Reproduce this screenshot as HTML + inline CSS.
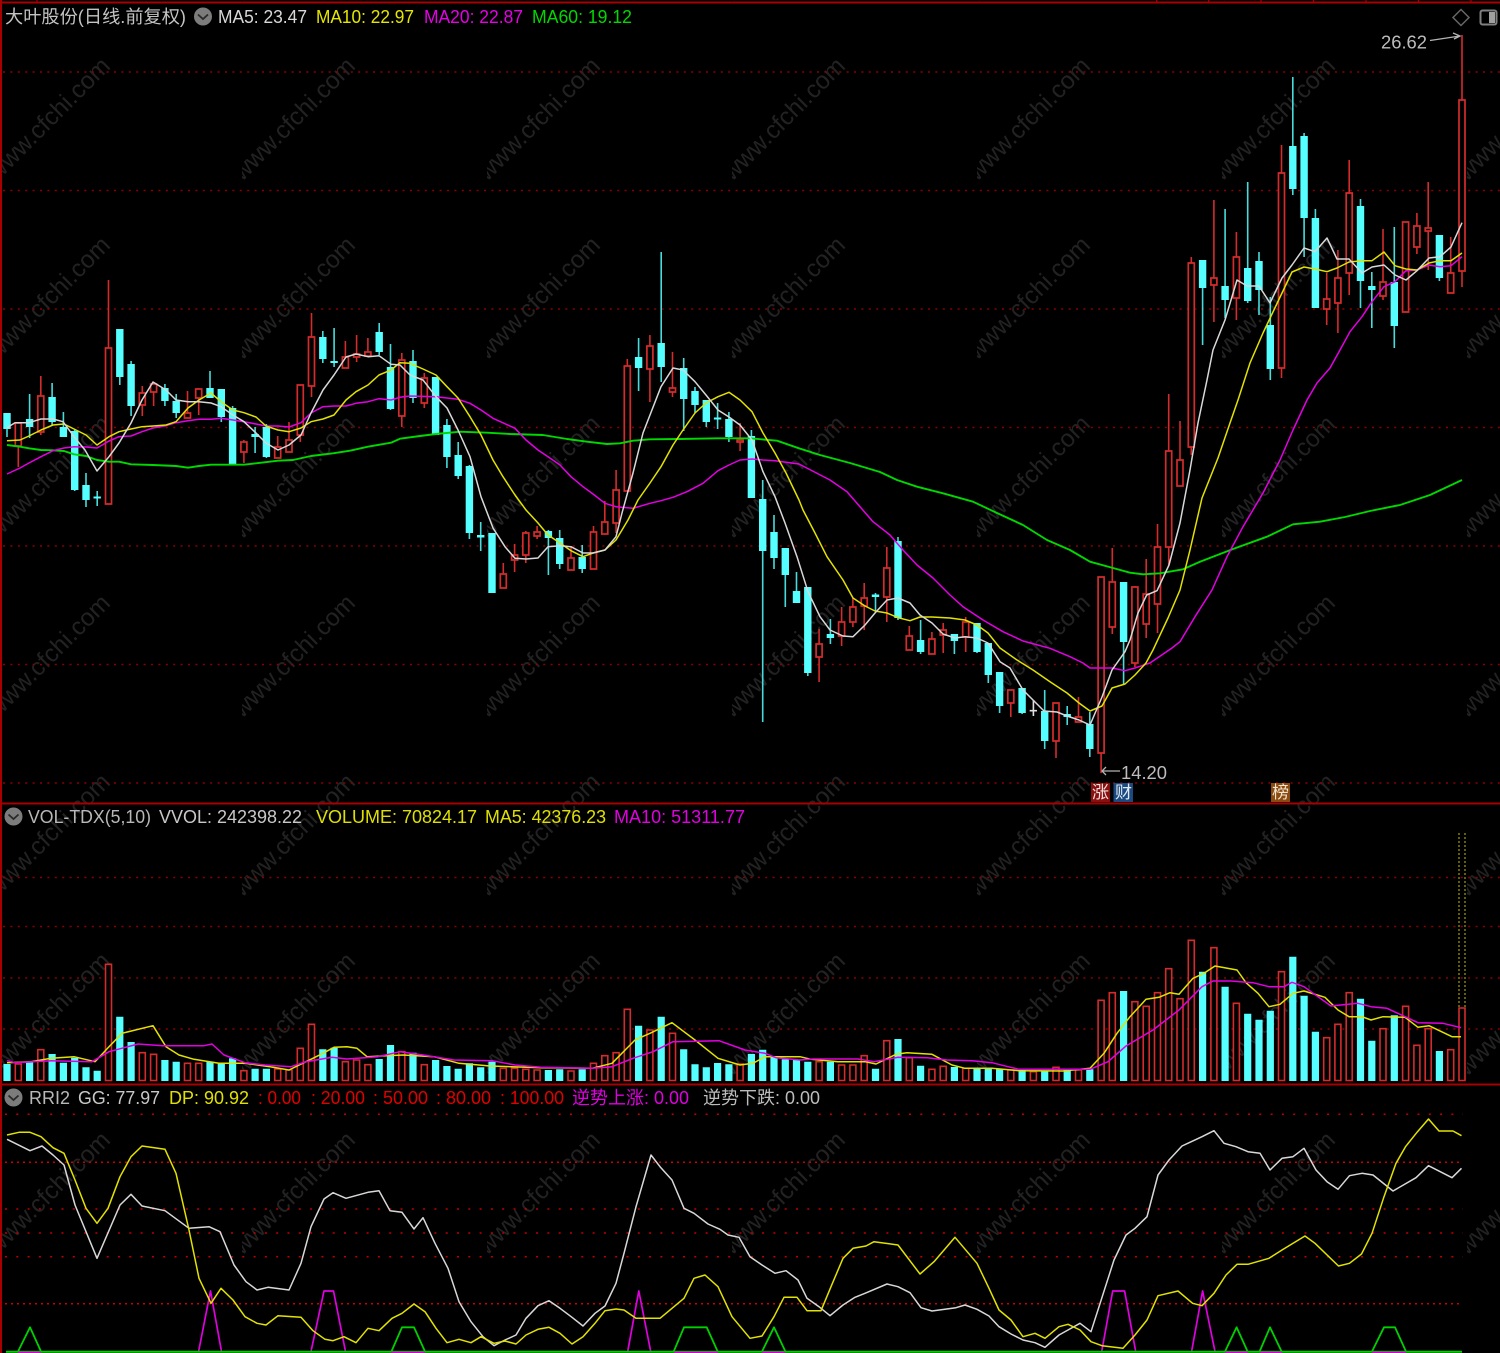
<!DOCTYPE html>
<html lang="zh"><head><meta charset="utf-8"><title>大叶股份</title>
<style>
html,body{margin:0;padding:0;background:#000;width:1500px;height:1353px;overflow:hidden}
svg{display:block}
text{font-family:"Liberation Sans","Noto Sans CJK SC",sans-serif;font-size:18px}
.l{fill:none;stroke-width:1.5;stroke-linejoin:round}
.w{stroke:#d8d8d8}.y{stroke:#e2e200}.m{stroke:#e400e4}.g{stroke:#00d800;stroke-width:1.9}
</style></head><body>
<svg xmlns="http://www.w3.org/2000/svg" width="1500" height="1353" viewBox="0 0 1500 1353">
<defs><pattern id="wm" x="-3" y="3" width="245" height="179" patternUnits="userSpaceOnUse"><text transform="translate(0,179) rotate(-45)" style="font-size:24.5px" fill="#222">www.cfchi.com</text></pattern></defs>
<rect width="1500" height="1353" fill="#000"/>
<rect width="1500" height="1290" fill="url(#wm)"/>

<!-- grid -->
<g fill="none" stroke="#8c0000" stroke-width="1.5" stroke-dasharray="2 5.4">
<path d="M3 72H1500M3 190.5H1500M3 309H1500M3 427.5H1500M3 546H1500M3 664.5H1500M3 783H1500"/>
<path d="M3 877.5H1500M3 926.5H1500M3 978H1500M3 1029H1500"/>
</g>
<g fill="none" stroke="#c00000" stroke-width="1.5" stroke-dasharray="2 9.3"><path d="M5 1114.3H1463M5 1209H1463M5 1233H1463M5 1256.7H1463"/></g>
<g fill="none" stroke="#cc0000" stroke-width="1.5" stroke-dasharray="2 4"><path d="M5 1162.3H1463M5 1303.7H1463"/></g>

<!-- frame -->
<g fill="none" stroke="#a80000">
<path d="M1 0V1353" stroke-width="2"/>
<path d="M0 2.5H1500" stroke-width="2"/>
<path d="M0 803.5H1500M0 1084.5H1500" stroke-width="2"/>
<path stroke-width="1.2" d="M37 0V2M1156.7 0V2M1208.7 0V2M1261 0V2M1313.5 0V2M1366 0V2M1418.5 0V2M1471 0V2"/>
</g>

<!-- red wicks -->
<path fill="none" stroke="#d42c2c" stroke-width="1.6" d="M18.3 423V467M40.8 376V435M108.5 280V504M142.3 386V416M153.6 382V406M187.5 391V418M198.7 388V415M243.9 440V463M277.7 436V458M289 422V452M300.3 385V442M311.5 313V397M345.4 341V368M356.6 335V362M367.9 338V356M401.8 353V427M424.3 373V408M503.3 563V588M514.6 544V572M525.8 531V563M537.1 526V539M571 547V570M593.5 526V569M604.8 501V534M616.1 470V533M627.3 359V491M649.9 335V402M672.5 352V397M740.1 423V451M819.1 629V682M841.6 607V646M852.9 598V627M864.2 583V630M886.8 547V622M909.3 626V650M931.9 632V654M943.2 623V653M965.7 617V652M1010.8 690V717M1056 703V758M1078.5 697V722M1101.1 577V773M1112.3 548V634M1134.9 586V667M1146.2 559V638M1157.5 524V633M1168.7 394V565M1180 421V486M1191.3 257V455M1213.9 200V322M1236.4 232V320M1281.5 145V378M1326.7 273V325M1337.9 250V333M1349.2 160V295M1383 229V300M1405.6 222V312M1416.9 213V254M1428.2 182V270M1450.7 237V293M1462 35V287"/>
<!-- cyan wicks -->
<path fill="none" stroke="#46dcdc" stroke-width="1.6" d="M7 413V437M29.6 394V438M52.1 383V425M63.4 412V437M74.7 430V491M86 473V507M97.2 491V506M119.8 329V385M131.1 361V416M164.9 384V406M176.2 394V418M210 371V398M221.3 389V422M232.6 406V464M255.1 427V453M266.4 424V458M322.8 331V363M334.1 328V367M379.2 323V355M390.5 344V410M413 350V403M435.6 377V435M446.9 419V468M458.2 442V479M469.4 465V539M480.7 522V551M492 533V593M548.4 530V575M559.7 530V569M582.2 545V573M638.6 338V391M661.2 252V382M683.7 358V431M695 387V413M706.3 400V427M717.6 403V429M728.9 412V442M751.4 430V498M762.7 480V722M774 515V569M785.3 548V607M796.5 572V603M807.8 587V676M830.4 619V644M875.5 593V611M898 537V620M920.6 620V654M954.4 634V654M977 623V653M988.3 643V683M999.6 672V713M1022.1 688V714M1044.7 690V749M1067.2 706V725M1089.8 712V757M1123.6 582V685M1202.6 260V345M1225.1 209V318M1247.7 182V303M1259 252V315M1270.3 297V380M1292.8 77V195M1304.1 133V257M1315.4 209V308M1360.5 199V308M1371.8 272V328M1394.3 227V348M1439.4 235V281"/>
<!-- cyan bodies -->
<path fill="none" stroke="#55ffff" stroke-width="7.4" d="M7 413V429M29.6 419V427M52.1 397V422M63.4 427V437M74.7 431V490M86 485V500M97.2 496.5V498.5M119.8 329V377M131.1 364V406M164.9 388V401M176.2 401V413M210 388V398M221.3 389V417M232.6 408V464M255.1 434V437M266.4 427V457M322.8 337V359M334.1 361V363M379.2 332V352M390.5 367V409M413 361V398M435.6 377V435M446.9 425V457M458.2 455V476M469.4 466V533M480.7 535V537.5M492 533V593M548.4 531V538M559.7 538V564M582.2 557V569M638.6 357V368M661.2 343V367M683.7 368V399M695 391V405M706.3 400V422M717.6 417.5V419.5M728.9 419V437M751.4 436V498M762.7 499V551M774 532V558M785.3 548V575M796.5 591V603M807.8 587V673M830.4 634V638M875.5 594.5V597M898 541V618M920.6 640V652M954.4 634V641M977 623V652M988.3 643V675M999.6 672V706M1022.1 688V713M1044.7 711V741M1067.2 714V717M1089.8 724V749M1123.6 582V642M1202.6 260V288M1225.1 286V300M1247.7 268V301M1259 261V290M1270.3 325V369M1292.8 146V189M1304.1 136V218M1315.4 218V308M1360.5 206V281M1371.8 286V290M1394.3 282V326M1439.4 235V278"/>
<path fill="none" stroke="#e0e0e0" stroke-width="1.6" d="M1033.4 700V716M1029.7 710.7H1037"/>
<!-- red bodies -->
<path fill="#000" stroke="#d42c2c" stroke-width="1.7" d="M15.3 423h6V446h-6zM37.8 396h6V432h-6zM105.5 348h6V504h-6zM139.3 393h6V405h-6zM150.6 384h6V392h-6zM184.5 413h6V418h-6zM195.7 389h6V398h-6zM240.9 442h6V452h-6zM274.7 447h6V458h-6zM286 440h6V452h-6zM297.3 385h6V435h-6zM308.5 337h6V386h-6zM342.4 357h6V368h-6zM353.6 354h6V357h-6zM364.9 352h6V356h-6zM398.8 360h6V416h-6zM421.3 378h6V403h-6zM500.3 574h6V588h-6zM511.6 555h6V560h-6zM522.8 533h6V555h-6zM534.1 532h6V536h-6zM568 558h6V570h-6zM590.5 532h6V569h-6zM601.8 522h6V534h-6zM613.1 490h6V523h-6zM624.3 366h6V491h-6zM646.9 346h6V369h-6zM669.5 388h6V392h-6zM737.1 440h6V442h-6zM816.1 644h6V657h-6zM838.6 622h6V636h-6zM849.9 607h6V622h-6zM861.2 598h6V606h-6zM883.8 568h6V597h-6zM906.3 636h6V650h-6zM928.9 639h6V654h-6zM940.2 630h6V635h-6zM962.7 622h6V637h-6zM1007.8 690h6V703h-6zM1053 703h6V741h-6zM1075.5 717h6V722h-6zM1098.1 577h6V753h-6zM1109.3 582h6V627h-6zM1131.9 587h6V663h-6zM1143.2 594h6V624h-6zM1154.5 547h6V604h-6zM1165.7 451h6V547h-6zM1177 460h6V486h-6zM1188.3 263h6V447h-6zM1210.9 278h6V285h-6zM1233.4 257h6V298h-6zM1278.5 173h6V368h-6zM1323.7 299h6V309h-6zM1334.9 278h6V303h-6zM1346.2 193h6V273h-6zM1380 282h6V296h-6zM1402.6 222h6V312h-6zM1413.9 226h6V247h-6zM1425.2 228h6V231h-6zM1447.7 273h6V293h-6zM1459 100h6V271h-6z"/>

<!-- MA lines main -->
<polyline class="l g" points="7,445 20,446.7 29,448.3 41,450 53,450.3 64,451 74,454.3 86,456 97,460 109,461.7 119,461.7 131,464.3 153,465 176,466 188,467.7 199,466 211,464.7 244,464.7 256,463.3 278,460.7 293,460 311,456 333,453.3 350,450.7 368,446.7 391,442.7 400,438.7 420,436 436,434 460,431.7 487,432.7 510,434 543,435 567,439 587,441.7 607,444 620,443.3 633,440.7 650,439.3 680,439 717,438.3 750,438.3 777,440.7 799,448.3 820,455 850,463 880,472 897,480 917,486.7 943,493.3 973,501.7 997,513 1023,525 1047,540 1070,550 1090,561.7 1113,568 1130,572.7 1143,574.3 1160,573.3 1183,569.3 1200,561.7 1233,549 1267,536.7 1293,524.3 1320,521.7 1345,517 1370,511 1400,505 1430,495 1462,480"/>
<polyline class="l m" points="7,474 20,468 29,463 41,456.7 53,450.7 64,448 74,446.7 86,447 97,448 109,441 119,436.7 131,436 142,431.7 153,428 166,425.7 176,422.7 188,420.7 199,419.3 211,419.3 221,418.3 233,420 244,421.7 256,424 266,426 278,426 289,427 301,422.7 311,413 323,406.7 334,406 346,406 356,403.3 368,401.7 379,398.7 391,400 400,397.3 410,396 436,396.7 458,399.3 470,403.3 481,410 493,418.3 515,428.3 526,440 538,450 548,456.7 560,465 571,476.7 583,486.7 593,494 605,503.3 616,506.7 633,508.3 650,503.3 661,500.7 673,497.3 687,491.7 703,483.3 718,470.7 729,465 740,460 752,459 763,460 775,460.7 799,464 830,480 847,491.7 860,506.7 873,521.7 890,535 903,550 917,565 933,578 950,595 963,606.7 983,620 1003,631.7 1023,641 1050,648.3 1070,656.7 1083,663 1090,668 1112,668 1125,670.7 1135,668 1150,663 1172,648 1180,641.7 1195,616.7 1212,590 1227,556.7 1243,526.7 1263,493 1280,460 1293,430 1307,400 1317,383 1330,368 1340,350 1350,331.7 1362,316.7 1372,301.7 1384,286.7 1395,281.7 1406,270.7 1417,270 1429,265 1440,266.7 1451,265.7 1462,256.7"/>
<polyline class="l y" points="7,440.7 20,440 29,436 41,430 53,425 64,424 74,429 86,435 97,445 109,436.7 119,431.7 131,429 142,426.7 153,426 166,425 176,421.7 188,408 199,400 211,393 221,401.7 233,410 244,412.7 256,417 266,426 278,430 289,431.7 301,428 311,421.7 323,419 334,415 346,400 356,391.7 368,385 379,375 391,370 400,362.7 410,363.3 423,369 436,375 447,386.7 458,398 470,416.7 481,435 493,460 503,476.7 515,495 526,510 538,523 548,535 560,543 571,550.7 583,556.7 593,553 605,550 616,540 628,520 638,500 650,483 661,466.7 673,445 683,430 695,413 706,403 718,396.7 729,392.3 740,400 752,411.7 763,433 775,453 786,473 799,500 803,510 815,533 827,556.7 843,580 853,598 865,606 875,611 887,613 898,617.7 910,620.7 920,617 932,617 950,618 965,620 977,625 988,633 1000,648 1017,660 1033,670 1050,681.7 1067,693 1079,703 1090,711 1102,706 1112,688 1125,684 1135,675 1146,663 1153,650 1168,618 1180,590 1190,550 1202,498 1218,458 1230,423 1238,400 1250,363 1263,333 1282,293 1292,272 1304,267 1315,269 1327,271.7 1337,268 1349,262 1362,260.7 1372,260.7 1384,252 1395,265.7 1406,269 1417,270 1429,263 1440,260.7 1451,260.7 1462,253"/>
<polyline class="l w" points="7,427.7 15,422.7 29,422.7 41,419 53,419 63,421.7 74,436.7 85,450 97,471 109,456.7 119,443 131,423 142,400 153,382 166,390 176,400 188,401.7 199,401.7 211,403 221,406.7 233,415 244,421.7 256,433 266,443 278,450 289,445 301,435 311,413 323,390 334,375 346,357 356,354 368,356.7 379,355.7 391,364.3 400,365 410,375 423,380 436,396.7 447,408 458,430 470,456.7 481,496.7 493,528 505,546.7 515,558.3 526,559 538,558 548,546.7 560,545.7 571,546.7 583,553 593,553 605,550 616,536.7 622,513 633,473 643,433 661,386.7 673,368 683,370 695,381.7 706,395 718,410 729,417 740,425 752,440 763,471.7 775,496.7 785,523 797,556.7 808,591.7 820,616.7 830,630 843,636 853,636.7 865,625 875,613 887,600 898,598 910,603 920,615 932,623 943,634 955,638 965,636.7 977,638 988,643 1000,661.7 1010,668 1023,690 1033,700 1044,711 1057,712 1067,716 1079,720 1090,725 1102,697 1112,670 1125,651.7 1130,640 1138,613 1146.7,595 1157,590.7 1169,565 1180,523 1190,470 1198,423 1207,380 1213,350 1225,320 1237,280 1247,286 1259,286 1270,303 1282,278 1292,265 1304,248 1315,251.7 1327,238 1337,259 1349,259 1362,273 1372,267 1384,265 1395,275 1406,280 1417,270.7 1429,258 1440,256.7 1451,247 1462,222.7"/>

<!-- volume: dotted column -->
<path fill="none" stroke="#8a8a00" stroke-width="1.4" stroke-dasharray="2 2" d="M1459 833V1008M1465 833V1008"/>
<!-- vol cyan -->
<path fill="none" stroke="#55ffff" stroke-width="7.2" d="M7 1064V1081M29.6 1061.7V1081M52.1 1054V1081M63.4 1062.7V1081M74.7 1057.7V1081M86 1067.3V1081M97.2 1070.7V1081M119.8 1016.7V1081M131.1 1042V1081M164.9 1060V1081M176.2 1061.7V1081M210 1061.7V1081M221.3 1063.3V1081M232.6 1058.3V1081M255.1 1068.7V1081M266.4 1068.7V1081M322.8 1049.3V1081M334.1 1047.7V1081M379.2 1059V1081M390.5 1045V1081M413 1052.7V1081M435.6 1060V1081M446.9 1066V1081M458.2 1068.7V1081M469.4 1063.3V1081M480.7 1067.3V1081M492 1061.7V1081M548.4 1070V1081M559.7 1069.3V1081M582.2 1069.3V1081M638.6 1025.7V1081M661.2 1016.7V1081M683.7 1049.3V1081M695 1064.3V1081M706.3 1067.3V1081M717.6 1063V1081M728.9 1064.3V1081M751.4 1054V1081M762.7 1049.7V1081M774 1057.3V1081M785.3 1059.3V1081M796.5 1060V1081M807.8 1061.7V1081M830.4 1061.7V1081M875.5 1068.7V1081M898 1039V1081M920.6 1065.7V1081M954.4 1067V1081M977 1068.3V1081M988.3 1068.3V1081M999.6 1069V1081M1022.1 1070V1081M1044.7 1071V1081M1067.2 1070V1081M1089.8 1069.3V1081M1123.6 991V1081M1202.6 971.7V1081M1225.1 986.7V1081M1247.7 1013.7V1081M1259 1019.7V1081M1270.3 1010.7V1081M1292.8 956.7V1081M1304.1 995.7V1081M1315.4 1031.7V1081M1360.5 998.7V1081M1371.8 1040.7V1081M1394.3 1015.3V1081M1439.4 1051V1081"/>
<!-- vol red -->
<path fill="#000" stroke="#d42c2c" stroke-width="1.6" d="M15.3 1064h6V1080.5h-6zM37.8 1049.7h6V1080.5h-6zM105.5 964.3h6V1080.5h-6zM139.3 1052.7h6V1080.5h-6zM150.6 1054.3h6V1080.5h-6zM184.5 1063.3h6V1080.5h-6zM195.7 1063.3h6V1080.5h-6zM240.9 1070.7h6V1080.5h-6zM274.7 1069h6V1080.5h-6zM286 1070h6V1080.5h-6zM297.3 1048.3h6V1080.5h-6zM308.5 1024.3h6V1080.5h-6zM342.4 1061.7h6V1080.5h-6zM353.6 1060h6V1080.5h-6zM364.9 1064.7h6V1080.5h-6zM398.8 1051.7h6V1080.5h-6zM421.3 1064.7h6V1080.5h-6zM500.3 1068.3h6V1080.5h-6zM511.6 1068.3h6V1080.5h-6zM522.8 1069.3h6V1080.5h-6zM534.1 1070h6V1080.5h-6zM568 1071h6V1080.5h-6zM590.5 1063.3h6V1080.5h-6zM601.8 1055.7h6V1080.5h-6zM613.1 1052.7h6V1080.5h-6zM624.3 1009.3h6V1080.5h-6zM646.9 1030h6V1080.5h-6zM669.5 1033.3h6V1080.5h-6zM737.1 1064h6V1080.5h-6zM816.1 1061.7h6V1080.5h-6zM838.6 1065h6V1080.5h-6zM849.9 1065h6V1080.5h-6zM861.2 1055.7h6V1080.5h-6zM883.8 1040.7h6V1080.5h-6zM906.3 1057.7h6V1080.5h-6zM928.9 1069.3h6V1080.5h-6zM940.2 1066.3h6V1080.5h-6zM962.7 1068.3h6V1080.5h-6zM1007.8 1070h6V1080.5h-6zM1030.4 1071.7h6V1080.5h-6zM1053 1067.3h6V1080.5h-6zM1075.5 1070h6V1080.5h-6zM1098.1 1000.3h6V1080.5h-6zM1109.3 992.7h6V1080.5h-6zM1131.9 1001.7h6V1080.5h-6zM1143.2 1006.3h6V1080.5h-6zM1154.5 992.7h6V1080.5h-6zM1165.7 968.7h6V1080.5h-6zM1177 998.7h6V1080.5h-6zM1188.3 940.3h6V1080.5h-6zM1210.9 947.7h6V1080.5h-6zM1233.4 1003.3h6V1080.5h-6zM1278.5 971.7h6V1080.5h-6zM1323.7 1037.7h6V1080.5h-6zM1334.9 1024.3h6V1080.5h-6zM1346.2 992.7h6V1080.5h-6zM1380 1028.7h6V1080.5h-6zM1402.6 1006.3h6V1080.5h-6zM1413.9 1045.3h6V1080.5h-6zM1425.2 1028.7h6V1080.5h-6zM1447.7 1049.7h6V1080.5h-6zM1459 1008h6V1080.5h-6z"/>
<!-- vol lines -->
<polyline class="l y" style="stroke-width:1.5" points="7,1062.7 31,1061.7 51,1058.3 74,1056.7 95,1061.7 109,1046.7 122,1033.3 153,1025.7 166,1046.7 179,1055 194,1059.3 219,1063.3 245,1063.3 270,1066.7 289,1070 306,1061.7 323,1053.3 334,1047.3 347,1046.7 357,1048.3 367,1056.7 403,1055 434,1056.7 459,1063.3 490,1066 541,1067.7 592,1068.3 612,1063.3 635,1040 650,1033.3 672,1022.7 695,1040 718,1058.3 740,1065 753,1063.3 765,1056.7 800,1056.7 811,1059.3 838,1061.7 865,1061.7 876,1064 896,1054.3 907,1052.7 932,1054.3 952,1065 965,1068.3 992,1068.3 1019,1070.7 1063,1071 1090,1068.3 1104,1053.3 1117,1033.3 1130,1016.7 1146,999.3 1159,997.3 1170,992.7 1179,994.3 1193,978.3 1204,973.3 1215,966 1237,970 1246,982.7 1258,993.3 1269,1006.7 1280,1004.3 1293,993.3 1304,991 1325,997.3 1338,1010 1349,1016.7 1362,1016.7 1371,1020 1383,1016.7 1405,1017.3 1418,1027.3 1429,1025.7 1452,1036.7 1461,1036.7"/>
<polyline class="l m" style="stroke-width:1.5" points="7,1060.7 15,1062.7 51,1060.7 92,1061.7 109,1051.7 138,1044 163,1045.7 204,1045.7 212,1044 224,1055 245,1062.7 265,1065 291,1066.7 306,1061.7 332,1057.3 347,1059 378,1056.7 400,1051.7 423,1055 454,1060 492,1060.7 515,1065 541,1067.3 592,1068.3 612,1066.7 633,1058.3 653,1051.7 673,1041.7 719,1040.7 745,1050 765,1053.3 776,1057.7 800,1060 813,1059 858,1059 874,1061.7 898,1057.3 927,1057.7 947,1060 972,1060.7 992,1062.7 1008,1066.7 1019,1069.3 1090,1069.3 1108,1061.7 1126,1046 1153,1030 1179,1010 1202,986.7 1213,981 1231,981 1253,982.7 1269,986.7 1284,986.7 1292,982.3 1304,986.7 1331,1006 1358,1003.3 1371,1006.7 1387,1008.3 1418,1022.7 1443,1023.3 1461,1027.7"/>

<!-- RRI -->
<path fill="none" stroke="#e000e0" stroke-width="1.7" stroke-linejoin="round" d="M198.6 1351.5L210.5 1291L221.5 1351.5M311 1351.5L324 1291H333.5L345.5 1351.5M627.7 1351.5L638.8 1291L650.7 1351.5M1101.7 1351.5L1112.7 1291H1124.6L1135.7 1351.5M1191.6 1351.5L1202.6 1291L1215 1351.5"/>
<polyline class="l w" points="7,1139.3 30,1150.7 42,1146 53,1155 64,1165 75,1205 97,1258.3 120,1205 131,1194.3 142,1206 165,1210.7 189,1228.3 209,1226.7 220,1231.7 234,1265 246,1281.7 257,1290 268,1287.3 289,1290 301,1263.3 311,1226.7 324,1199 333,1192.7 346,1198.3 368,1192.3 379,1190.7 390,1210.7 402,1212.3 414,1229 423,1217.7 435,1243.3 448,1268.3 459,1301.7 471,1321.7 483,1336.7 494,1345.7 505,1340 516,1335 526,1318.3 538,1305.7 549,1300.7 560,1308.3 572,1317.3 583,1326 595,1313.3 605,1306 616,1283.3 624,1253.3 636,1206.7 651,1155 660,1166.7 672,1180 684,1208.3 694,1213.3 708,1224 720,1229.3 728,1235 739,1237.3 750,1256.7 762,1265 775,1273.3 786,1270.7 798,1280 807,1298.3 819,1306.7 830,1315.7 843,1305 855,1297.3 865,1293.3 887,1284 898,1286.7 910,1292.7 921,1307.7 932,1311 956,1307.7 965,1305 977,1309.3 989,1316 999,1326.7 1011,1334 1023,1340 1035,1342.7 1045,1347.3 1059,1335 1068,1330 1080,1323.3 1091,1331.7 1114,1260 1126,1235 1135,1228.3 1147,1216.7 1158,1175 1169,1160 1182,1146 1202,1136.7 1214,1130.7 1224,1143.3 1236,1146.7 1248,1151.7 1260,1153.3 1270,1170 1282,1158.3 1293,1156.7 1304,1148.3 1316,1170 1327,1181.7 1338,1189.3 1349.5,1175.7 1362,1173.3 1373,1175 1393,1191 1416,1177.7 1428.5,1165.7 1452,1177.7 1461.5,1168.3"/>
<polyline class="l y" points="7,1135 19,1132.3 30,1132.3 41,1136.7 53,1147.7 64,1153.3 75,1180 86,1208.3 97,1223.3 108,1208.3 120,1176.7 131,1156.7 142,1146 165,1149.3 176,1173.3 189,1230 199,1278.3 211,1303.3 221,1288.3 233,1300 245,1316.7 257,1323.3 266,1325 278,1315.7 301,1317.3 313,1330.7 325,1339.3 333,1340.7 344,1336.7 356,1342.7 368,1328.3 379,1330.7 392,1318.3 402,1313.3 414,1304 425,1311.7 436,1328.3 447,1342.7 459,1339.3 471,1342.7 481,1336.7 494,1343.3 505,1341 516,1344 526,1335 538,1329.3 549,1327.3 560,1333.3 572,1344 583,1336.7 595,1323.3 605,1310.7 616,1309 624,1310 636,1318.3 660,1318.3 684,1298.3 694,1278.3 705,1275 718,1286.7 732,1316.7 750,1338.3 762,1336 774,1316.7 784,1297.3 797,1297.3 807,1310.7 821,1310.7 831,1286.7 843,1258.3 853,1248.3 866,1246 874,1241.7 898,1245 920,1274 934,1261.7 955,1237.3 977,1263.3 989,1288.3 999,1310 1011,1320 1023,1336.7 1035,1333.3 1045,1338.3 1059,1326.7 1068,1324.3 1080,1330 1091,1341.7 1102,1345.7 1123,1348.3 1135,1335 1147,1320 1158,1295.7 1178,1291 1192.6,1303.3 1202,1305.7 1214,1293.3 1226,1275 1237,1264.3 1248,1264.3 1269,1258.3 1282,1250 1305,1236 1315,1243.3 1338.5,1266 1349.5,1263.3 1361.5,1254 1372,1233.3 1384,1196.7 1396,1163.3 1405.5,1146.7 1417.5,1131.7 1428.5,1119 1439,1131 1453,1131 1461.5,1135.7"/>
<path fill="none" stroke="#00d000" stroke-width="1.8" stroke-linejoin="round" d="M18 1351.5L30 1327.3L41 1351.5M391.4 1351.5L402 1327.3H414L425 1351.5M673.7 1351.5L684 1327.3H706.7L717.7 1351.5M762 1351.5L774 1327.3L785.4 1351.5M1225 1351.5L1236.6 1327.3L1247.6 1351.5M1259.6 1351.5L1270 1327.3L1281.6 1351.5M1372 1351.5L1384 1327.3H1395L1406 1351.5"/>
<path d="M6 1351.8H1462" fill="none" stroke="#00d000" stroke-width="2"/>
<path fill="none" stroke="#d000d0" stroke-width="1.6" d="M18 1352.4H41M391 1352.4H425M674 1352.4H718M762 1352.4H785M1225 1352.4H1248M1260 1352.4H1282M1372 1352.4H1406"/>

<!-- text row 1 -->
<g>
<text x="5" y="23" fill="#c4c4c4" textLength="181" lengthAdjust="spacingAndGlyphs">大叶股份(日线.前复权)</text>
<circle cx="203" cy="16.5" r="9" fill="#7c7c7c"/><path d="M198 14.5l5 4.5 5-4.5" fill="none" stroke="#2a2a2a" stroke-width="1.8"/>
<text x="218" y="23" fill="#d8d8d8" textLength="89" lengthAdjust="spacingAndGlyphs">MA5: 23.47</text>
<text x="316" y="23" fill="#e6e600" textLength="98" lengthAdjust="spacingAndGlyphs">MA10: 22.97</text>
<text x="424" y="23" fill="#e600e6" textLength="99" lengthAdjust="spacingAndGlyphs">MA20: 22.87</text>
<text x="532" y="23" fill="#00d800" textLength="100" lengthAdjust="spacingAndGlyphs">MA60: 19.12</text>
<path d="M1461 9.5l8 8-8 8-8-8z" fill="none" stroke="#666" stroke-width="1.5"/>
<rect x="1480.5" y="10.5" width="16" height="14" rx="2" fill="none" stroke="#808080" stroke-width="2"/><rect x="1489" y="12" width="6" height="11" fill="#a0a0a0"/>
<text x="1381" y="48.5" fill="#bcbcbc" textLength="46" lengthAdjust="spacingAndGlyphs">26.62</text>
<path d="M1430 40.5L1460 36M1453 33l7 3-6 3" fill="none" stroke="#b4b4b4" stroke-width="1.3"/>
<path d="M1102 771H1120M1106 767l-4 4 4 4" fill="none" stroke="#b4b4b4" stroke-width="1.3"/>
<text x="1121" y="779" fill="#bcbcbc" textLength="46" lengthAdjust="spacingAndGlyphs">14.20</text>
<rect x="1091" y="783" width="19" height="19" fill="#8a1010"/><text x="1092" y="798" fill="#f0e0e0" style="font-size:17px">涨</text>
<rect x="1113.5" y="783" width="19.5" height="19" fill="#1c4a80"/><text x="1115" y="798" fill="#e0e8f0" style="font-size:17px">财</text>
<rect x="1271" y="783" width="19" height="19" fill="#8a4a10"/><text x="1272" y="798" fill="#f0e4d0" style="font-size:17px">榜</text>
</g>
<!-- row 2 -->
<g>
<circle cx="13.5" cy="816.5" r="9" fill="#7c7c7c"/><path d="M8.5 814.5l5 4.5 5-4.5" fill="none" stroke="#2a2a2a" stroke-width="1.8"/>
<text x="28" y="823" fill="#b8b8b8" textLength="123" lengthAdjust="spacingAndGlyphs">VOL-TDX(5,10)</text>
<text x="159" y="823" fill="#c8c8c8" textLength="143" lengthAdjust="spacingAndGlyphs">VVOL: 242398.22</text>
<text x="316" y="823" fill="#e0e000" textLength="161" lengthAdjust="spacingAndGlyphs">VOLUME: 70824.17</text>
<text x="485" y="823" fill="#e0e000" textLength="121" lengthAdjust="spacingAndGlyphs">MA5: 42376.23</text>
<text x="614" y="823" fill="#e000e0" textLength="131" lengthAdjust="spacingAndGlyphs">MA10: 51311.77</text>
</g>
<!-- row 3 -->
<g>
<circle cx="13.5" cy="1097.5" r="9" fill="#7c7c7c"/><path d="M8.5 1095.5l5 4.5 5-4.5" fill="none" stroke="#2a2a2a" stroke-width="1.8"/>
<text x="29" y="1104" fill="#b8b8b8" textLength="41" lengthAdjust="spacingAndGlyphs">RRI2</text>
<text x="78" y="1104" fill="#c8c8c8" textLength="82" lengthAdjust="spacingAndGlyphs">GG: 77.97</text>
<text x="169" y="1104" fill="#e0e000" textLength="80" lengthAdjust="spacingAndGlyphs">DP: 90.92</text>
<text x="258" y="1104" fill="#e00000" textLength="43" lengthAdjust="spacingAndGlyphs">: 0.00</text>
<text x="311" y="1104" fill="#e00000" textLength="54" lengthAdjust="spacingAndGlyphs">: 20.00</text>
<text x="373" y="1104" fill="#e00000" textLength="55" lengthAdjust="spacingAndGlyphs">: 50.00</text>
<text x="436" y="1104" fill="#e00000" textLength="55" lengthAdjust="spacingAndGlyphs">: 80.00</text>
<text x="500" y="1104" fill="#e00000" textLength="64" lengthAdjust="spacingAndGlyphs">: 100.00</text>
<text x="572" y="1104" fill="#e000e0" textLength="117" lengthAdjust="spacingAndGlyphs">逆势上涨: 0.00</text>
<text x="703" y="1104" fill="#bcbcbc" textLength="117" lengthAdjust="spacingAndGlyphs">逆势下跌: 0.00</text>
</g>
</svg>
</body></html>
